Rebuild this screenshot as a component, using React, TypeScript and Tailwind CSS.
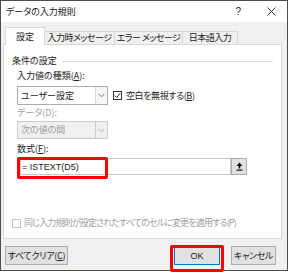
// Excel "データの入力規則" dialog
function Chevron({ color = "#7a7a7a" }: { color?: string }) {
  return (
    <svg width="7" height="5" viewBox="0 0 7 5">
      <polyline points="0.5,0.8 3.5,3.8 6.5,0.8" fill="none" stroke={color} strokeWidth="1" />
    </svg>
  );
}

function Combo({ text, disabled }: { text: string; disabled?: boolean }) {
  return (
    <div
      className={`w-[91px] flex border ${
        disabled ? "h-[18px] border-[#cccccc] bg-[#f0f0f0] text-[#a0a0a0]" : "h-[19px] border-[#adadad] bg-white"
      }`}
    >
      <div className="flex-1 flex items-center pl-[3px]">{text}</div>
      <div
        className={`w-[12px] flex items-center justify-center border-l ${
          disabled ? "border-[#cccccc]" : "border-[#d9d9d9] bg-[#f7f7f7]"
        }`}
      >
        <Chevron color={disabled ? "#b5b5b5" : "#7a7a7a"} />
      </div>
    </div>
  );
}

export default function App() {
  const tabs = ["入力時メッセージ", "エラー メッセージ", "日本語入力"];
  const tabWidths = ["w-[70px]", "w-[68px]", "w-[55px]"];

  return (
    <div className="relative w-[290px] h-[273px] bg-white font-['Noto_Sans_CJK_JP',sans-serif] [font-feature-settings:'palt'] text-[9px] leading-[10px] text-[#222]">
      <div className="w-[288px] h-[271px] border border-[#4d4d4d] bg-[#f0f0f0] flex flex-col">
        {/* title bar */}
        <div className="h-[21px] bg-white flex items-center pl-[5px] pr-[11px] shrink-0">
          <span>データの入力規則</span>
          <span className="ml-auto text-[10px] font-['Liberation_Sans',sans-serif]">?</span>
          <svg className="ml-[26px]" width="9" height="9" viewBox="0 0 9 9">
            <path d="M0.5 0.5 L8.5 8.5 M8.5 0.5 L0.5 8.5" stroke="#333" strokeWidth="1" />
          </svg>
        </div>

        {/* tabs */}
        <div className="mt-[6px] ml-[2px] mr-[5px] flex flex-col">
          <div className="flex items-end h-[17px] pl-[2px] relative z-10 -mb-px whitespace-nowrap">
            <div className="w-[40px] h-[18px] bg-white border border-b-0 border-[#d9d9d9] flex items-center justify-center">
              設定
            </div>
            {tabs.map((t, i) => (
              <div
                key={t}
                className={`${tabWidths[i]} h-[14px] border border-l-0 border-[#d9d9d9] flex items-center justify-center tracking-[-0.5px]`}
              >
                {t}
              </div>
            ))}
          </div>

          {/* panel */}
          <div className="h-[195px] bg-white border border-[#d9d9d9] pl-[8px] pr-[8px] flex flex-col">
            <div className="mt-[11px] flex items-center">
              <span>条件の設定</span>
              <div className="flex-1 ml-[5px] h-px bg-[#dcdcdc]" />
            </div>

            <div className="pl-[5px] flex flex-col">
              <div className="mt-[5px]">
                入力値の種類(<span className="underline">A</span>):
              </div>
              <div className="mt-[5px] flex items-center">
                <Combo text="ユーザー設定" />
                <div className="ml-[5px] flex items-center">
                  <div className="w-[9px] h-[9px] border border-[#333] bg-white flex items-center justify-center">
                    <svg width="7" height="7" viewBox="0 0 7 7">
                      <polyline points="0.8,3.6 2.7,5.5 6.2,1.2" fill="none" stroke="#222" strokeWidth="1" />
                    </svg>
                  </div>
                  <span className="ml-[4px] tracking-[-0.4px]">
                    空白を無視する(<span className="underline">B</span>)
                  </span>
                </div>
              </div>

              <div className="mt-[3px] text-[#a0a0a0]">データ(D):</div>
              <div className="mt-[3px]">
                <Combo text="次の値の間" disabled />
              </div>

              <div className="mt-[5px]">
                数式(<span className="underline">F</span>):
              </div>
              <div className="mt-[4px] ml-[3px] flex h-[17px]">
                <div className="w-[211px] border border-[#c8c8c8] bg-white flex items-center pl-[1px] font-['Liberation_Sans',sans-serif] text-[9px]">
                  = ISTEXT(D5)
                </div>
                <div className="w-[16px] border border-[#adadad] bg-[#e1e1e1] flex items-center justify-center">
                  <svg width="7" height="9" viewBox="0 0 7 9">
                    <path d="M3.5 0.5 L6.5 4 L4.3 4 L4.3 6.5 L2.7 6.5 L2.7 4 L0.5 4 Z" fill="#111" />
                    <rect x="0.5" y="7.5" width="6" height="1.2" fill="#111" />
                  </svg>
                </div>
              </div>
            </div>

            <div className="mt-[43px] flex items-center text-[#a0a0a0] whitespace-nowrap">
              <div className="w-[9px] h-[9px] border border-[#c4c4c4] bg-white shrink-0" />
              <span className="ml-[3px] tracking-[-0.85px]">同じ入力規則が設定されたすべてのセルに変更を適用する(P)</span>
            </div>
          </div>
        </div>

        {/* buttons */}
        <div className="mt-[7px] flex items-start pl-[4px] pr-[11px]">
          <div className="w-[63px] h-[19px] border border-[#adadad] bg-[#e1e1e1] flex items-center justify-center tracking-[-0.3px]">
            すべてクリア(<span className="underline">C</span>)
          </div>
          <div className="ml-auto w-[46px] h-[19px] border border-[#0078d7] bg-[#e1e1e1] flex items-center justify-center font-['Liberation_Sans',sans-serif]">
            OK
          </div>
          <div className="ml-[11px] w-[45px] h-[19px] border border-[#adadad] bg-[#e1e1e1] flex items-center justify-center tracking-[-0.3px]">
            キャンセル
          </div>
        </div>
      </div>

      {/* red highlight frames */}
      <div className="absolute left-[17px] top-[157px] w-[91px] h-[22px] border-[3px] border-[#ff0000] rounded-[2px]" />
      <div className="absolute left-[170px] top-[245px] w-[54px] h-[27px] border-[3px] border-[#ff0000] rounded-[2px]" />
    </div>
  );
}
